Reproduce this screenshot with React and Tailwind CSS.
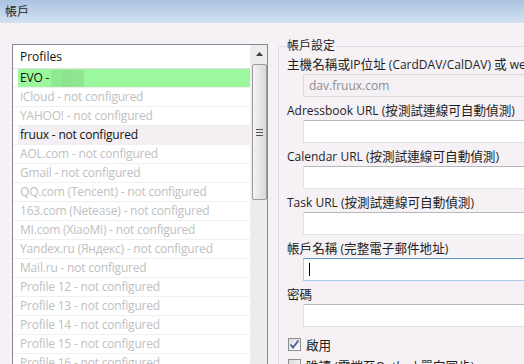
import React from "react";

const FONT = { fontFamily: '"Open Sans", "Noto Sans CJK TC", sans-serif' };

function T({ children }) {
  const parts = String(children).split(/([\u3000-\u9fff\uff00-\uffef]+)/);
  return (
    <>
      {parts.map((p, i) =>
        i % 2 === 1 ? (
          <span key={i} className="text-[12.6px]" style={{ fontFamily: '"Noto Sans CJK TC", sans-serif' }}>
            {p}
          </span>
        ) : (
          <span key={i}>{p}</span>
        )
      )}
    </>
  );
}

const rows = [
  { t: "EVO - ", kind: "evo" },
  { t: "iCloud - not configured" },
  { t: "YAHOO! - not configured" },
  { t: "fruux - not configured", kind: "sel" },
  { t: "AOL.com - not configured" },
  { t: "Gmail - not configured" },
  { t: "QQ.com (Tencent) - not configured" },
  { t: "163.com (Netease) - not configured" },
  { t: "MI.com (XiaoMi) - not configured" },
  { t: "Yandex.ru (Яндекс) - not configured" },
  { t: "Mail.ru - not configured" },
  { t: "Profile 12 - not configured" },
  { t: "Profile 13 - not configured" },
  { t: "Profile 14 - not configured" },
  { t: "Profile 15 - not configured" },
  { t: "Profile 16 - not configured" },
];

function Row({ r }) {
  let inner = "ml-[5px] h-full flex items-center pl-[2px] tracking-[-0.2px] ";
  if (r.kind === "evo") inner += "bg-[#9cf89c] text-[#111]";
  else if (r.kind === "sel") inner += "bg-[#f3eff3] text-[#111]";
  else inner += "text-[#c0c0c0]";
  return (
    <div className="h-[19px] shrink-0 border-b border-[#f0f0f0]">
      <div className={inner}>
        <span className="whitespace-nowrap">{r.t}</span>
        {r.kind === "evo" && (
          <span className="flex ml-[2px]">
            <span className="w-[11px] h-[17px] bg-[#90e890]" />
            <span className="w-[11px] h-[17px] bg-[#8ee48e]" />
            <span className="w-[11px] h-[17px] bg-[#92e592]" />
          </span>
        )}
      </div>
    </div>
  );
}

function Field({ label, value, disabled, focused }) {
  let cls = "ml-[16px] mt-[2px] h-[23px] w-[260px] border flex items-center pl-[5px] ";
  if (disabled) cls += "bg-[#f4f0f4] border-[#d9d9d9] text-[#8e8e8e]";
  else if (focused) cls += "bg-white border-[#a9cbec] border-t-[#5d9ad6]";
  else cls += "bg-white border-[#dfe2e6] border-t-[#b5b8bd]";
  return (
    <div className="mb-[4px]">
      <div className="h-[17px] leading-[17px] whitespace-nowrap text-[#1e1e1e]">
        <T>{label}</T>
      </div>
      <div className={cls}>
        {value}
        {focused && <span className="w-[1px] h-[13px] bg-black" />}
      </div>
    </div>
  );
}

function Check({ label, checked }) {
  return (
    <div className="flex items-center h-[21px]">
      <span className="w-[13px] h-[13px] border border-[#8e8f8f] bg-gradient-to-br from-[#dcdcdc] to-[#fbfbfb] flex items-center justify-center">
        {checked && (
          <svg width="11" height="11" viewBox="0 0 11 11">
            <path d="M1.5 5.5 L4 8.5 L9.5 1.5" fill="none" stroke="#4a5f97" strokeWidth="1.8" />
          </svg>
        )}
      </span>
      <span className="ml-[5px] whitespace-nowrap text-[#1e1e1e] leading-[17px]">
        <T>{label}</T>
      </span>
    </div>
  );
}

export default function App() {
  return (
    <div className="w-[524px] h-[364px] overflow-hidden bg-[#f5f1f5] flex flex-col text-[12px]" style={FONT}>
      <div className="h-[23px] shrink-0 bg-gradient-to-b from-[#a9c4e2] to-[#d3e1f0] pl-[5px] flex items-center text-[#1e1e1e]">
        帳戶
      </div>
      <div className="flex pl-[12px] pt-[21px] gap-[10px]">
        <div className="w-[256px] h-[330px] shrink-0 border border-[#828790] bg-white flex">
          <div className="flex-1 flex flex-col">
            <div className="h-[24px] shrink-0 border-b border-[#e3e3e3] flex items-center pl-[7px] text-[#111]">Profiles</div>
            {rows.map((r, i) => (
              <Row key={i} r={r} />
            ))}
          </div>
          <div className="w-[17px] shrink-0 bg-[#ececec] border-l border-[#f2f2f2] flex flex-col items-center">
            <div className="h-[18px] w-full flex items-center justify-center">
              <svg width="7" height="4" viewBox="0 0 7 4">
                <path d="M0 4 L3.5 0 L7 4 Z" fill="#3c3c3c" />
              </svg>
            </div>
            <div className="mt-[1px] w-[15px] h-[136px] rounded-[2px] border border-[#9b9b9b] bg-gradient-to-r from-[#f4f4f4] to-[#d9d9d9] flex flex-col items-center justify-center gap-[2px]">
              <span className="w-[7px] h-[1px] bg-[#555]" />
              <span className="w-[7px] h-[1px] bg-[#555]" />
              <span className="w-[7px] h-[1px] bg-[#555]" />
            </div>
          </div>
        </div>
        <div className="relative mt-[2px] w-[300px] h-[340px] shrink-0 border border-[#d5dfe5] rounded-[3px] pl-[8px] pt-[8px]">
          <div className="absolute left-[7px] top-[-9px] px-[1px] h-[16px] leading-[16px] bg-[#f5f1f5] text-[#1e1e1e]">帳戶設定</div>
          <Field label="主機名稱或IP位址 (CardDAV/CalDAV) 或 web" value="dav.fruux.com" disabled />
          <Field label="Adressbook URL (按測試連線可自動偵測)" />
          <Field label="Calendar URL (按測試連線可自動偵測)" />
          <Field label="Task URL (按測試連線可自動偵測)" />
          <Field label="帳戶名稱 (完整電子郵件地址)" focused />
          <Field label="密碼" />
          <div className="mt-[7px] ml-[1px]">
            <Check label="啟用" checked />
            <Check label="唯讀 (雲端至Outlook單向同步)" />
          </div>
        </div>
      </div>
    </div>
  );
}
